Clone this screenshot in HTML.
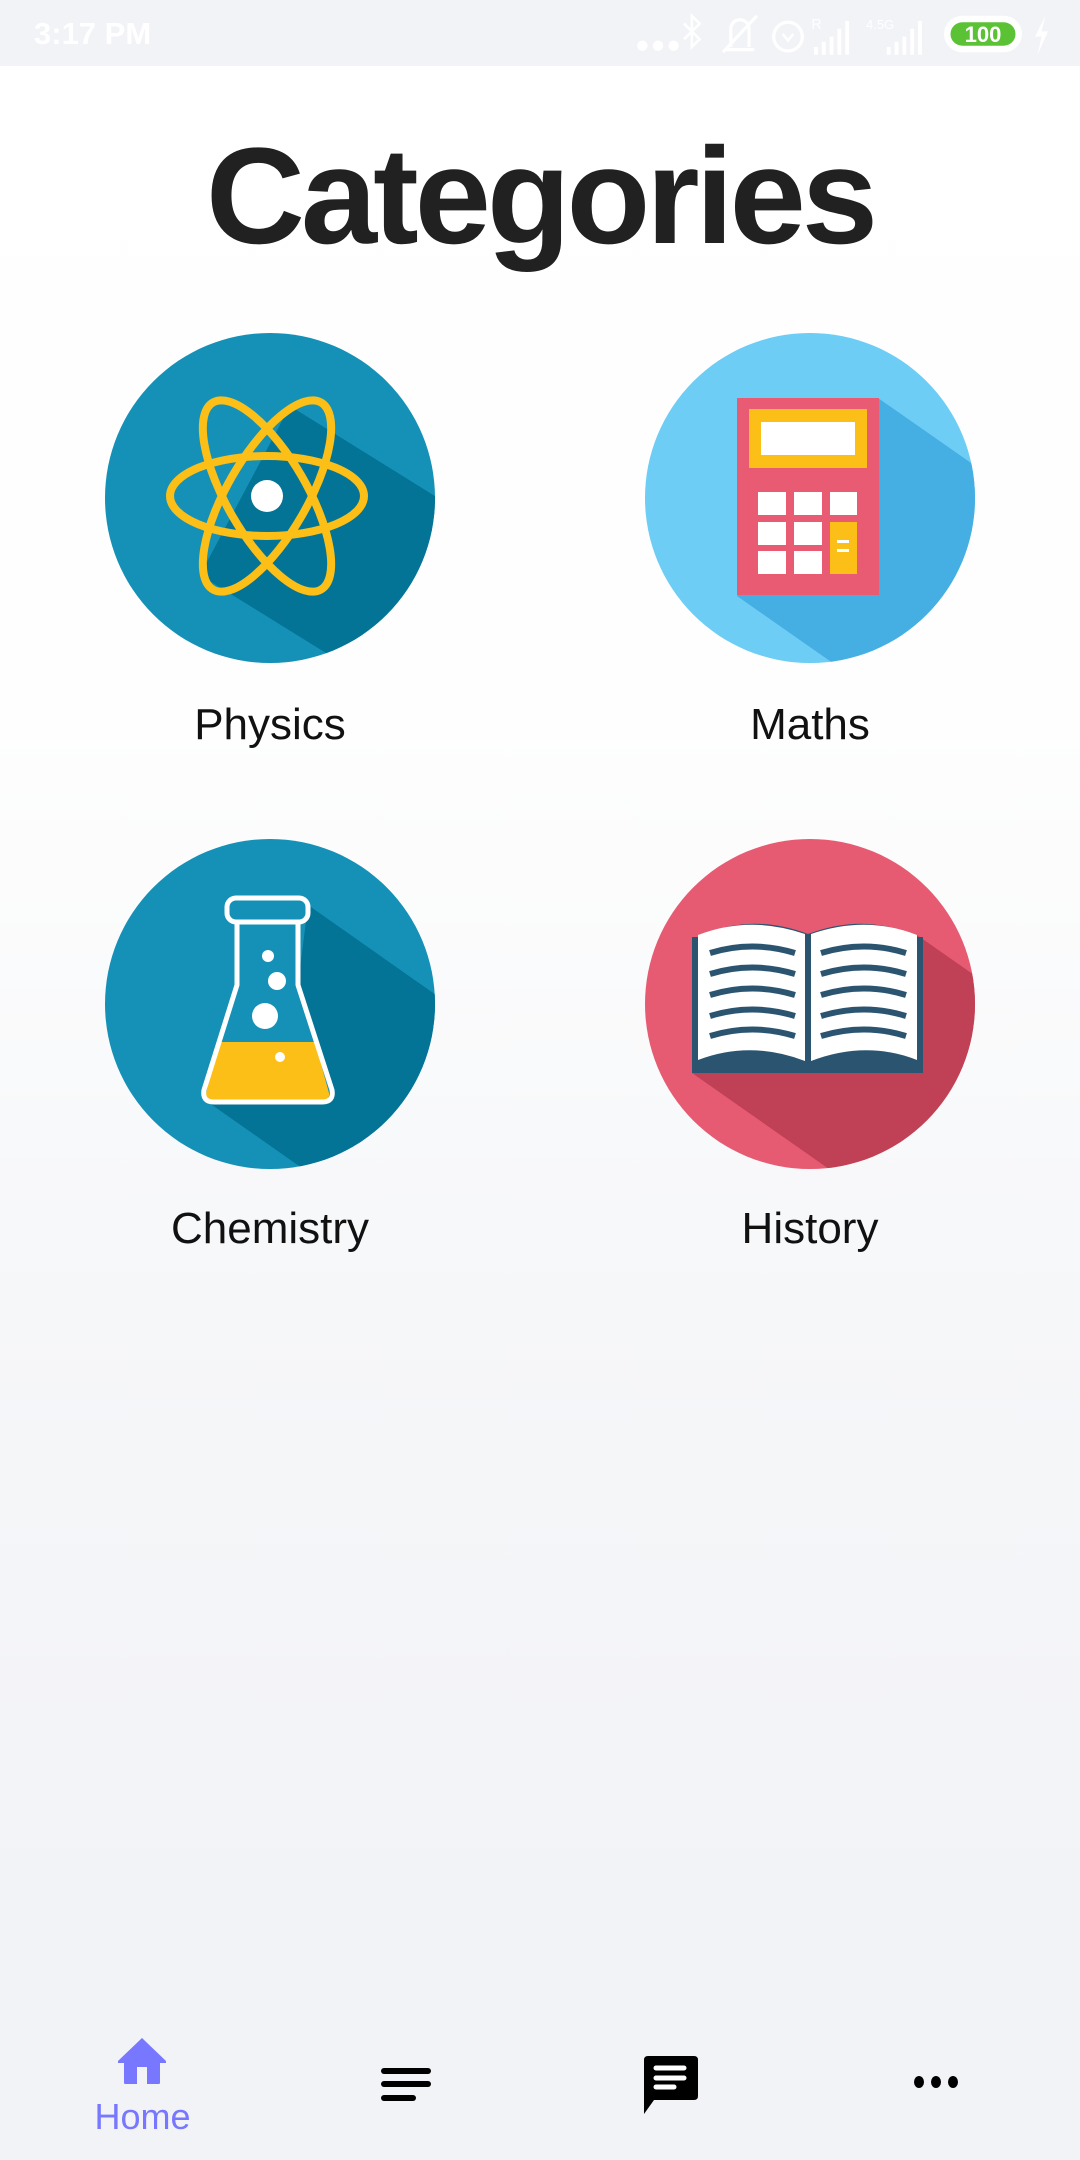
<!DOCTYPE html>
<html><head><meta charset="utf-8"><style>
html,body{margin:0;padding:0;}
body{width:1080px;height:2160px;position:relative;overflow:hidden;background:linear-gradient(#ffffff 0px,#fefefe 700px,#f6f7f9 1300px,#f2f3f7 1900px);font-family:"Liberation Sans",sans-serif;}
.sb{position:absolute;left:0;top:0;width:1080px;height:66px;background:#f2f3f7;}
.time{position:absolute;left:34px;top:16px;color:#fff;font-weight:bold;font-size:31px;}
h1{position:absolute;left:0;width:1080px;top:118px;margin:0;text-align:center;font-size:137px;font-weight:bold;color:#212121;letter-spacing:-4px;}
.lbl{position:absolute;width:400px;text-align:center;font-size:44px;color:#111;}
svg{position:absolute;}
.nav{position:absolute;}
</style></head><body>
<div class="sb"><div class="time">3:17 PM</div>
<svg style="left:630px;top:8px" width="420" height="52" viewBox="0 0 320 40">
<g fill="#fff"><circle cx="8" cy="29" r="4"/><circle cx="20" cy="29" r="4"/><circle cx="32" cy="29" r="4"/></g>
<path d="M40 12l12 12-6 6V6l6 6-12 12" stroke="#fff" stroke-width="2" fill="none"/>
<path d="M72 32h22M76 30V16a7 7 0 0 1 14 0v14M70 34L96 6" stroke="#fff" stroke-width="2.5" fill="none"/>
<circle cx="120" cy="22" r="11" stroke="#fff" stroke-width="2.5" fill="none"/>
<path d="M116 20l4 5 4-5" stroke="#fff" stroke-width="2" fill="none"/>
<g fill="#fff"><rect x="140" y="30" width="3" height="6"/><rect x="146" y="26" width="3" height="10"/><rect x="152" y="22" width="3" height="14"/><rect x="158" y="16" width="3" height="20"/><rect x="164" y="10" width="3" height="26"/>
<rect x="196" y="30" width="3" height="6"/><rect x="202" y="26" width="3" height="10"/><rect x="208" y="22" width="3" height="14"/><rect x="214" y="16" width="3" height="20"/><rect x="220" y="10" width="3" height="26"/></g>
<text x="138" y="16" fill="#fff" font-size="11" font-family="Liberation Sans">R</text>
<text x="180" y="16" fill="#fff" font-size="10" font-family="Liberation Sans">4.5G</text>
<rect x="240" y="6" width="60" height="28" rx="14" fill="#fff"/>
<rect x="245" y="11" width="50" height="18" rx="9" fill="#5bc236"/>
<text x="270" y="26" fill="#fff" font-size="17" font-weight="bold" text-anchor="middle" font-family="Liberation Sans">100</text>
<path d="M318 6l-8 16h5l-3 14 8-18h-5z" fill="#fff"/>
</svg></div>
<h1>Categories</h1>

<!-- Physics -->
<svg style="left:105px;top:333px" width="330" height="330" viewBox="-165 -165 330 330">
<defs><clipPath id="c1"><circle r="165"/></clipPath></defs>
<circle r="165" fill="#1591b8"/>
<polygon clip-path="url(#c1)" points="20,-92 300,82 300,306 -70,77" fill="#037396"/>
<g fill="none" stroke="#fbbf17" stroke-width="8">
<ellipse cx="-3" cy="-2" rx="97" ry="40"/>
<ellipse cx="-3" cy="-2" rx="108" ry="40" transform="rotate(60 -3 -2)"/>
<ellipse cx="-3" cy="-2" rx="108" ry="40" transform="rotate(-60 -3 -2)"/>
</g>
<circle cx="-3" cy="-2" r="16" fill="#fff"/>
</svg>
<div class="lbl" style="left:70px;top:700px">Physics</div>

<!-- Maths -->
<svg style="left:645px;top:333px" width="330" height="330" viewBox="645 333 330 330">
<defs><clipPath id="c2"><circle cx="810" cy="498" r="165"/></clipPath></defs>
<circle cx="810" cy="498" r="165" fill="#6dcdf5"/>
<polygon clip-path="url(#c2)" points="878,398 1100,553 1100,850 737,596" fill="#45aee3"/>
<rect x="737" y="398" width="142" height="197" fill="#e85b72"/>
<rect x="749" y="409" width="118" height="59" fill="#fbbf17"/>
<rect x="761" y="422" width="94" height="33" fill="#fff"/>
<g fill="#fff">
<rect x="758" y="492" width="28" height="23"/><rect x="794" y="492" width="28" height="23"/><rect x="830" y="492" width="27" height="23"/>
<rect x="758" y="522" width="28" height="23"/><rect x="794" y="522" width="28" height="23"/>
<rect x="758" y="551" width="28" height="23"/><rect x="794" y="551" width="28" height="23"/></g>
<rect x="830" y="522" width="27" height="52" fill="#fbbf17"/>
<rect x="837" y="540" width="12" height="3" fill="#fff"/><rect x="837" y="549" width="12" height="3" fill="#fff"/>
</svg>
<div class="lbl" style="left:610px;top:700px">Maths</div>

<!-- Chemistry -->
<svg style="left:105px;top:839px" width="330" height="330" viewBox="105 839 330 330">
<defs><clipPath id="c3"><circle cx="270" cy="1004" r="165"/></clipPath></defs>
<circle cx="270" cy="1004" r="165" fill="#1591b8"/>
<polygon clip-path="url(#c3)" points="308,905 500,1040 500,1307 205,1100 333,1098 298,985" fill="#037396"/>
<path d="M219 1042 L315 1042 L329 1093 Q330 1100 322 1100 L212 1100 Q204 1100 206 1093 Z" fill="#fbbf17"/>
<path d="M237 922 L237 985 L204 1090 Q202 1102 214 1102 L322 1102 Q334 1102 332 1090 L298 985 L298 922" fill="none" stroke="#fff" stroke-width="5" stroke-linejoin="round"/>
<rect x="227" y="898" width="81" height="24" rx="9" fill="none" stroke="#fff" stroke-width="5"/>
<g fill="#fff"><circle cx="268" cy="956" r="6"/><circle cx="277" cy="981" r="9"/><circle cx="265" cy="1016" r="13"/><circle cx="280" cy="1057" r="5"/></g>
</svg>
<div class="lbl" style="left:70px;top:1204px">Chemistry</div>

<!-- History -->
<svg style="left:645px;top:839px" width="330" height="330" viewBox="645 839 330 330">
<defs><clipPath id="c4"><circle cx="810" cy="1004" r="165"/></clipPath></defs>
<circle cx="810" cy="1004" r="165" fill="#e65b72"/>
<polygon clip-path="url(#c4)" points="917,935 1100,1063 1100,1359 692,1073" fill="#c04156"/>
<path d="M692 937 L698 937 Q750 912 808 934 Q866 912 917 937 L923 937 L923 1073 L692 1073 Z" fill="#2b5470"/>
<path d="M698 935 Q750 915 805 934 L805 1061 Q750 1040 698 1060 Z" fill="#fff"/>
<path d="M811 934 Q866 915 917 935 L917 1060 Q866 1040 811 1061 Z" fill="#fff"/>
<g fill="none" stroke="#2b5470" stroke-width="6">
<path d="M710 953 Q752 940 795 953"/><path d="M710 974 Q752 961 795 974"/><path d="M710 995 Q752 982 795 995"/><path d="M710 1016 Q752 1003 795 1016"/><path d="M710 1036 Q752 1023 795 1036"/>
<path d="M821 953 Q864 940 906 953"/><path d="M821 974 Q864 961 906 974"/><path d="M821 995 Q864 982 906 995"/><path d="M821 1016 Q864 1003 906 1016"/><path d="M821 1036 Q864 1023 906 1036"/>
</g>
</svg>
<div class="lbl" style="left:610px;top:1204px">History</div>

<!-- bottom nav -->
<svg class="nav" style="left:115px;top:2036px" width="54" height="50" viewBox="0 0 54 50">
<path d="M27 2 L3 25 L3 27 L9 27 L9 47 Q9 48 11 48 L22 48 L22 31 L32 31 L32 48 L43 48 Q45 48 45 47 L45 27 L51 27 L51 25 Z" fill="#7777ff"/>
</svg>
<div class="nav" style="left:60px;top:2096px;width:165px;text-align:center;font-size:36px;color:#7777ff">Home</div>
<svg class="nav" style="left:380px;top:2066px" width="52" height="40" viewBox="0 0 52 40">
<g stroke="#000" stroke-width="6" stroke-linecap="round"><line x1="4" y1="5" x2="48" y2="5"/><line x1="4" y1="18" x2="48" y2="18"/><line x1="4" y1="32" x2="33" y2="32"/></g>
</svg>
<svg class="nav" style="left:642px;top:2054px" width="60" height="62" viewBox="0 0 60 62">
<path d="M2 6 Q2 2 6 2 L52 2 Q56 2 56 6 L56 42 Q56 46 52 46 L12 46 L2 60 Z" fill="#000"/>
<g stroke="#fff" stroke-width="5" stroke-linecap="round"><line x1="14" y1="14" x2="42" y2="14"/><line x1="14" y1="24" x2="42" y2="24"/><line x1="14" y1="33" x2="32" y2="33"/></g>
</svg>
<svg class="nav" style="left:912px;top:2072px" width="50" height="20" viewBox="0 0 50 20">
<g fill="#000"><ellipse cx="7" cy="10" rx="5" ry="6"/><ellipse cx="24" cy="10" rx="5" ry="6"/><ellipse cx="41" cy="10" rx="5" ry="6"/></g>
</svg>
</body></html>
